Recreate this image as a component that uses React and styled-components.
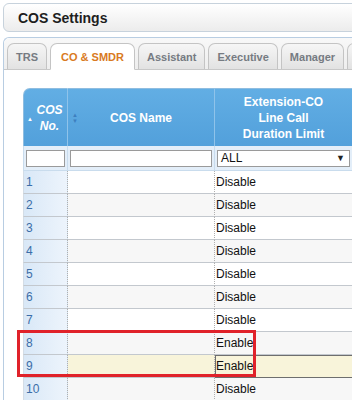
import React from 'react'
import styled, { createGlobalStyle } from 'styled-components'

const Global = createGlobalStyle`
    html, body {
        margin: 0;
        padding: 0;
        background: #ffffff;
        overflow: hidden;
        font-family: "Liberation Sans", Arial, sans-serif;
    }
`

const Page = styled.div`
    width: 352px;
    height: 400px;
    position: relative;
    overflow: hidden;
    padding: 3px 0 0 3px;
    box-sizing: border-box;
`

const TitleBar = styled.div`
    height: 29px;
    margin-right: -10px;
    border: 1px solid #c7d2dc;
    border-radius: 6px;
    background: linear-gradient(#ffffff, #ececec);
    display: flex;
    align-items: center;
    padding-left: 14px;
    box-sizing: border-box;
    font-size: 14px;
    font-weight: bold;
    color: #1e1e1e;
`

const Panel = styled.div`
    margin-top: 5px;
    margin-right: -10px;
    border: 1px solid #b8cde2;
    border-right: none;
    border-bottom: none;
    border-top-left-radius: 6px;
    height: 400px;
`

const TabStrip = styled.div`
    display: flex;
    gap: 3px;
    padding: 5px 0 0 3px;
    height: 32px;
    box-sizing: border-box;
    background: linear-gradient(#f8f8f8, #eeeeee);
    border-bottom: 1px solid #c8c8c8;
    border-top-left-radius: 6px;
    align-items: flex-end;
`

const Tab = styled.div`
    height: ${p => (p.$active ? '27px' : '26px')};
    padding: 0 ${p => (p.$active ? '10px' : '8px')};
    display: flex;
    align-items: center;
    font-size: 11px;
    font-weight: bold;
    color: ${p => (p.$active ? '#d97a22' : '#767b82')};
    background: ${p => (p.$active ? '#ffffff' : 'linear-gradient(#f6f6f6, #e2e2e2)')};
    border: 1px solid #c4c4c4;
    border-bottom: ${p => (p.$active ? '1px solid #ffffff' : 'none')};
    margin-bottom: ${p => (p.$active ? '-1px' : '0')};
    border-radius: 7px 7px 0 0;
    box-sizing: border-box;
    white-space: nowrap;
    flex-shrink: 0;
`

const Content = styled.div`
    padding: 18px 0 0 19px;
`

const Grid = styled.table`
    border-collapse: separate;
    border-spacing: 0;
    table-layout: fixed;
    width: 330px;
    font-size: 12px;
    color: #1a1a1a;
`

const HeadCell = styled.th`
    height: 57px;
    background: linear-gradient(#62aee4, #52a0db);
    color: #ffffff;
    font-weight: bold;
    font-size: 12px;
    line-height: 16px;
    text-align: center;
    vertical-align: middle;
    border-right: 1px solid #8fc3ea;
    border-top: 1px solid #8fbde0;
    padding: 0 0 0 ${p => p.$indent || 0}px;
    position: relative;
    font-style: ${p => (p.$italic ? 'italic' : 'normal')};
    &:first-child {
        border-top-left-radius: 7px;
        border-left: 1px solid #8fbde0;
    }
`

const SortIcon = styled.span`
    position: absolute;
    left: ${p => p.$left}px;
    top: ${p => p.$top}px;
    font-size: 6px;
    line-height: 6px;
    color: ${p => p.$color};
    font-style: normal;
`

const FilterCell = styled.td`
    height: 25px;
    background: #e3eef9;
    padding: 0 2px;
    border-right: 1px solid #c9dced;
    border-bottom: 1px solid #c9dced;
    box-sizing: border-box;
    &:first-child {
        border-left: 1px solid #c9dced;
    }
`

const FilterBox = styled.div`
    height: 17px;
    border: 1px solid #9a9a9a;
    background: #ffffff;
    box-sizing: border-box;
    display: flex;
    align-items: center;
    justify-content: space-between;
    padding: 0 4px 0 3px;
    font-size: 12px;
    color: #111;
`

const Arrow = styled.span`
    font-size: 9px;
    color: #222;
`

const Row = styled.tr`
    background: ${p => (p.$alt ? '#f7f7f7' : '#ffffff')};
`

const NumCell = styled.td`
    height: 23px;
    padding: 0 2px;
    color: #3b6ea8;
    background: linear-gradient(to right, #d9e8f7, #edf4fc);
    border-bottom: 1px solid #c3c8ce;
    border-right: 1px dotted #b0b0b0;
    border-left: 1px solid #d4dde6;
    box-sizing: border-box;
`

const DataCell = styled.td`
    height: 23px;
    padding: 0 1px;
    background: ${p => (p.$picked ? '#f8f4da' : 'transparent')};
    border-bottom: 1px solid #c3c8ce;
    border-right: 1px dotted #b0b0b0;
    box-sizing: border-box;
    outline: ${p => (p.$focus ? '1px solid #6e6e6e' : 'none')};
    outline-offset: -1px;
    color: #111;
`

const Mark = styled.div`
    position: absolute;
    left: 17px;
    top: 330px;
    width: 239px;
    height: 47px;
    border: 3px solid #e0222a;
    box-sizing: border-box;
    pointer-events: none;
`

const tabs = ['TRS', 'CO & SMDR', 'Assistant', 'Executive', 'Manager', 'Operator']

const rows = [
    { id: 1, limit: 'Disable' },
    { id: 2, limit: 'Disable' },
    { id: 3, limit: 'Disable' },
    { id: 4, limit: 'Disable' },
    { id: 5, limit: 'Disable' },
    { id: 6, limit: 'Disable' },
    { id: 7, limit: 'Disable' },
    { id: 8, limit: 'Enable' },
    { id: 9, limit: 'Enable', picked: true },
    { id: 10, limit: 'Disable' },
    { id: 11, limit: 'Disable' },
]

export default function App() {
    return (
        <Page>
            <Global />
            <TitleBar>COS Settings</TitleBar>
            <Panel>
                <TabStrip>
                    {tabs.map(t => (
                        <Tab key={t} $active={t === 'CO & SMDR'}>{t}</Tab>
                    ))}
                </TabStrip>
                <Content>
                    <Grid>
                        <colgroup>
                            <col style={{ width: 45 }} />
                            <col style={{ width: 147 }} />
                            <col style={{ width: 138 }} />
                        </colgroup>
                        <thead>
                            <tr>
                                <HeadCell $italic $indent={8}>
                                    <SortIcon $left={3} $top={27} $color="#ffffff">▲</SortIcon>
                                    COS<br />No.
                                </HeadCell>
                                <HeadCell>
                                    <SortIcon $left={4} $top={23} $color="#3d7fbf">▲<br />▼</SortIcon>
                                    COS Name
                                </HeadCell>
                                <HeadCell>Extension-CO<br />Line Call<br />Duration Limit</HeadCell>
                            </tr>
                            <tr>
                                <FilterCell><FilterBox /></FilterCell>
                                <FilterCell><FilterBox /></FilterCell>
                                <FilterCell>
                                    <FilterBox>ALL<Arrow>▼</Arrow></FilterBox>
                                </FilterCell>
                            </tr>
                        </thead>
                        <tbody>
                            {rows.map((r, i) => (
                                <Row key={r.id} $alt={i % 2 === 1}>
                                    <NumCell>{r.id}</NumCell>
                                    <DataCell $picked={r.picked}></DataCell>
                                    <DataCell $picked={r.picked} $focus={r.picked}>{r.limit}</DataCell>
                                </Row>
                            ))}
                        </tbody>
                    </Grid>
                </Content>
            </Panel>
            <Mark />
        </Page>
    )
}
